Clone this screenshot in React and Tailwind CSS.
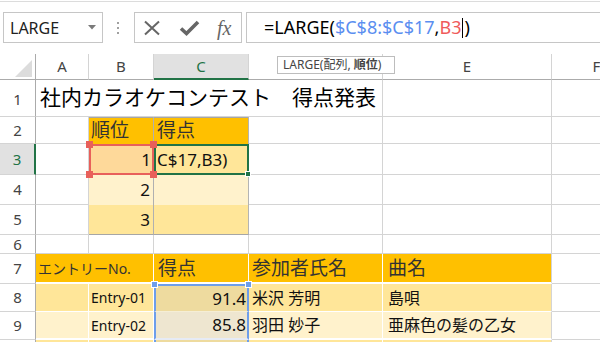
import React from 'react';

const font = "font-['Noto_Sans','Noto_Sans_CJK_JP',sans-serif]";

// Row number on the left edge
const RowHead = ({ n, active, low }) => (
  <div
    className={`w-[36px] shrink-0 flex justify-center text-[15px] border-b border-b-[#d4d4d4] ${
      low ? 'items-end pb-[6px]' : 'items-center'
    } ${
      active
        ? 'bg-[#e1e1e1] text-[#217346] border-r-2 border-r-[#217346]'
        : 'bg-white text-[#444] border-r border-r-[#ababab]'
    }`}
  >
    {n}
  </div>
);

const Cell = ({ w, className = '', children }) => (
  <div className={`${w} shrink-0 relative flex items-center whitespace-nowrap ${className}`}>{children}</div>
);

const grid = 'border-r border-b border-r-[#d4d4d4] border-b-[#d4d4d4] bg-white';

const Handle = ({ className }) => <div className={`absolute z-10 w-[7px] h-[7px] ${className}`} />;

const ColHead = ({ w, label, active }) => (
  <div
    className={`${w} shrink-0 flex items-center justify-center text-[15px] border-r border-r-[#d4d4d4] ${
      active
        ? 'bg-[#e1e1e1] text-[#217346] border-b-2 border-b-[#217346]'
        : 'bg-white text-[#444] border-b border-b-[#ababab]'
    }`}
  >
    {label}
  </div>
);

const FormulaBar = () => (
  <div className="h-[53px] mt-[1px] border-t border-t-[#dcdcdc] pt-[10px] flex items-start">
    {/* name box */}
    <div className="ml-[3px] w-[100px] h-[31px] border border-[#c6c6c6] flex items-center pl-[6px] pr-[6px]">
      <span className="flex-1 text-[16px] text-[#222]">LARGE</span>
      <svg width="8" height="5" viewBox="0 0 8 5">
        <path d="M0 0 L8 0 L4 4.5 Z" fill="#7a7a7a" />
      </svg>
    </div>
    <div className="ml-[14px] mt-[10px] flex flex-col gap-[3px]">
      <div className="w-[2px] h-[2px] bg-[#a0a0a0]" />
      <div className="w-[2px] h-[2px] bg-[#a0a0a0]" />
      <div className="w-[2px] h-[2px] bg-[#a0a0a0]" />
    </div>
    {/* cancel / enter / fx */}
    <div className="ml-[15px] w-[108px] h-[31px] border border-[#c6c6c6] flex items-center pl-[8px]">
      <svg width="18" height="16" viewBox="0 0 18 16">
        <path d="M2 1.5 L16 14.5 M16 1.5 L2 14.5" stroke="#666" strokeWidth="2" fill="none" />
      </svg>
      <svg className="ml-[18px]" width="21" height="16" viewBox="0 0 21 16">
        <path d="M2 8.5 L7.5 13.5 L19 2" stroke="#666" strokeWidth="3.6" fill="none" />
      </svg>
      <span className="ml-[17px] text-[20px] italic text-[#666] font-['Liberation_Serif',serif] leading-none">fx</span>
    </div>
    {/* formula */}
    <div className="ml-[4px] flex-1 h-[31px] border-y border-l border-[#c6c6c6] flex items-center pl-[17px] text-[18px] text-black">
      <span>=LARGE(</span>
      <span className="text-[#5b8ef0]">$C$8:$C$17</span>
      <span>,</span>
      <span className="text-[#ef5b5b]">B3</span>
      <span className="inline-block w-[1px] h-[20px] bg-black mx-[1px]" />
      <span>)</span>
    </div>
  </div>
);

export default function App() {
  return (
    <div className={`w-[600px] h-[342px] overflow-hidden bg-white relative ${font}`}>
      <FormulaBar />

      {/* column headers */}
      <div className="flex h-[26px]">
        <div className="w-[36px] shrink-0 relative border-r border-b border-r-[#ababab] border-b-[#ababab]">
          <svg className="absolute inset-0" width="36" height="26" viewBox="0 0 36 26">
            <path d="M32 6 L32 23 L15 23 Z" fill="#dcdcdc" />
          </svg>
        </div>
        <ColHead w="w-[53px]" label="A" />
        <ColHead w="w-[65px]" label="B" />
        <ColHead w="w-[95px]" label="C" active />
        <ColHead w="w-[134px]" label="D" />
        <ColHead w="w-[169px]" label="E" />
        <ColHead w="w-[90px]" label="F" />
      </div>

      {/* row 1 */}
      <div className="flex h-[37px]">
        <RowHead n="1" low />
        <Cell w="w-[347px]" className={`${grid} pl-[4px] text-[21px] text-black`}>
          社内カラオケコンテスト　得点発表
        </Cell>
        <Cell w="w-[169px]" className={grid} />
        <Cell w="w-[90px]" className={grid} />
      </div>

      {/* row 2 */}
      <div className="flex h-[27px] text-[#333]">
        <RowHead n="2" />
        <Cell w="w-[53px]" className={grid} />
        <Cell w="w-[65px]" className="bg-[#ffc000] border-r border-r-[#b0b0b0] pl-[2px] text-[19px] shadow-[inset_0_1px_0_#a6a6a6]">
          順位
        </Cell>
        <Cell w="w-[95px]" className="bg-[#ffc000] border-r border-r-[#b4b4b4] pl-[3px] text-[19px] shadow-[inset_0_1px_0_#a6a6a6]">
          得点
        </Cell>
        <Cell w="w-[134px]" className={grid} />
        <Cell w="w-[169px]" className={grid} />
        <Cell w="w-[90px]" className={grid} />
      </div>

      {/* row 3 */}
      <div className="flex h-[31px] text-[17px] text-[#111]">
        <RowHead n="3" active />
        <Cell w="w-[53px]" className={grid} />
        <Cell w="w-[65px]" className="bg-[#fed99a] border-2 border-[#e8605a] justify-end pr-[1px]">
          1
          <Handle className="bg-[#e8605a] -left-[5px] -top-[5px]" />
          <Handle className="bg-[#e8605a] -right-[5px] -top-[5px]" />
          <Handle className="bg-[#e8605a] -left-[5px] -bottom-[5px]" />
          <Handle className="bg-[#e8605a] -right-[5px] -bottom-[5px]" />
        </Cell>
        <Cell w="w-[95px]" className="bg-[#ffe699] border-2 border-[#217346] pl-[1px]">
          C$17,B3)
          <div className="absolute z-10 -right-[4px] -bottom-[4px] w-[6px] h-[6px] bg-[#217346] border border-white" />
        </Cell>
        <Cell w="w-[134px]" className={grid} />
        <Cell w="w-[169px]" className={grid} />
        <Cell w="w-[90px]" className={grid} />
      </div>

      {/* row 4 */}
      <div className="flex h-[30px] text-[17px] text-[#111]">
        <RowHead n="4" />
        <Cell w="w-[53px]" className={grid} />
        <Cell w="w-[65px]" className="bg-[#fff2cc] border-r border-r-[#b0b0b0] justify-end pr-[3px]">
          2
        </Cell>
        <Cell w="w-[95px]" className="bg-[#fff2cc] border-r border-r-[#b4b4b4]" />
        <Cell w="w-[134px]" className={grid} />
        <Cell w="w-[169px]" className={grid} />
        <Cell w="w-[90px]" className={grid} />
      </div>

      {/* row 5 */}
      <div className="flex h-[30px] text-[17px] text-[#111]">
        <RowHead n="5" />
        <Cell w="w-[53px]" className={grid} />
        <Cell w="w-[65px]" className="bg-[#ffe699] border-r border-b border-r-[#b0b0b0] border-b-[#a6a6a6] justify-end pr-[3px]">
          3
        </Cell>
        <Cell w="w-[95px]" className="bg-[#ffe699] border-r border-b border-r-[#b4b4b4] border-b-[#a6a6a6]" />
        <Cell w="w-[134px]" className={grid} />
        <Cell w="w-[169px]" className={grid} />
        <Cell w="w-[90px]" className={grid} />
      </div>

      {/* row 6 */}
      <div className="flex h-[19px] overflow-hidden">
        <RowHead n="6" />
        <Cell w="w-[53px]" className={grid} />
        <Cell w="w-[65px]" className={grid} />
        <Cell w="w-[95px]" className={grid} />
        <Cell w="w-[134px]" className={grid} />
        <Cell w="w-[169px]" className={grid} />
        <Cell w="w-[90px]" className={grid} />
      </div>

      {/* row 7: list header */}
      <div className="flex h-[30px] text-[#333]">
        <RowHead n="7" />
        <Cell w="w-[118px]" className="bg-[#ffc000] border-r border-b-2 border-r-white border-b-white pl-[2px] text-[14px]">
          エントリーNo.
        </Cell>
        <Cell w="w-[95px]" className="bg-[#ffc000] border-r border-b-2 border-r-white border-b-white pl-[4px] text-[19px]">
          得点
        </Cell>
        <Cell w="w-[134px]" className="bg-[#ffc000] border-r border-b-2 border-r-white border-b-white pl-[3px] text-[19px]">
          参加者氏名
        </Cell>
        <Cell w="w-[169px]" className="bg-[#ffc000] border-r border-b-2 border-r-[#d4d4d4] border-b-white pl-[5px] text-[19px]">
          曲名
        </Cell>
        <Cell w="w-[90px]" className={grid} />
      </div>

      {/* row 8 */}
      <div className="flex h-[28px] text-[#111]">
        <RowHead n="8" />
        <Cell w="w-[53px]" className="bg-[#ffe699] border-r border-b border-r-white border-b-white" />
        <Cell w="w-[65px]" className="bg-[#ffe699] border-r border-b border-r-white border-b-white pl-[2px] text-[14px]">
          Entry-01
        </Cell>
        <Cell w="w-[95px]" className="bg-[#eedb9f] border-x-2 border-t-2 border-b border-x-[#6d9eeb] border-t-[#6d9eeb] border-b-[#f5eed5] justify-end pr-[1px] text-[17px]">
          91.4
          <Handle className="bg-[#6d9eeb] border border-white -left-[5px] -top-[5px]" />
          <Handle className="bg-[#6d9eeb] border border-white -right-[5px] -top-[5px]" />
        </Cell>
        <Cell w="w-[134px]" className="bg-[#ffe699] border-r border-b border-r-white border-b-white pl-[3px] text-[16px]">
          米沢 芳明
        </Cell>
        <Cell w="w-[169px]" className="bg-[#ffe699] border-r border-b border-r-[#d4d4d4] border-b-white pl-[5px] text-[16px]">
          島唄
        </Cell>
        <Cell w="w-[90px]" className={grid} />
      </div>

      {/* row 9 */}
      <div className="flex h-[28px] text-[#111]">
        <RowHead n="9" />
        <Cell w="w-[53px]" className="bg-[#fff2cc] border-r border-b-2 border-r-white border-b-white" />
        <Cell w="w-[65px]" className="bg-[#fff2cc] border-r border-b-2 border-r-white border-b-white pl-[2px] text-[14px]">
          Entry-02
        </Cell>
        <Cell w="w-[95px]" className="bg-[#eee6d0] border-x-2 border-b-2 border-x-[#6d9eeb] border-b-[#e6ebf5] justify-end pr-[1px] text-[17px]">
          85.8
        </Cell>
        <Cell w="w-[134px]" className="bg-[#fff2cc] border-r border-b-2 border-r-white border-b-white pl-[3px] text-[16px]">
          羽田 妙子
        </Cell>
        <Cell w="w-[169px]" className="bg-[#fff2cc] border-r border-b-2 border-r-[#d4d4d4] border-b-white pl-[5px] text-[16px]">
          亜麻色の髪の乙女
        </Cell>
        <Cell w="w-[90px]" className={grid} />
      </div>

      {/* row 10 (cut off) */}
      <div className="flex h-[28px]">
        <RowHead n="" />
        <Cell w="w-[53px]" className="bg-[#ffe699] border-r border-r-white" />
        <Cell w="w-[65px]" className="bg-[#ffe699] border-r border-r-white" />
        <Cell w="w-[95px]" className="bg-[#eedb9f] border-x-2 border-x-[#6d9eeb]" />
        <Cell w="w-[134px]" className="bg-[#ffe699] border-r border-r-white" />
        <Cell w="w-[169px]" className="bg-[#ffe699] border-r border-r-[#d4d4d4]" />
        <Cell w="w-[90px]" className={grid} />
      </div>

      {/* function tooltip */}
      <div className="absolute left-[277px] top-[56px] w-[118px] h-[18px] pl-[5px] flex items-center bg-white border border-[#bdbdbd] text-[12px] text-[#444] whitespace-pre">
        LARGE(配列, <span className="font-bold">順位</span>)
      </div>
    </div>
  );
}
